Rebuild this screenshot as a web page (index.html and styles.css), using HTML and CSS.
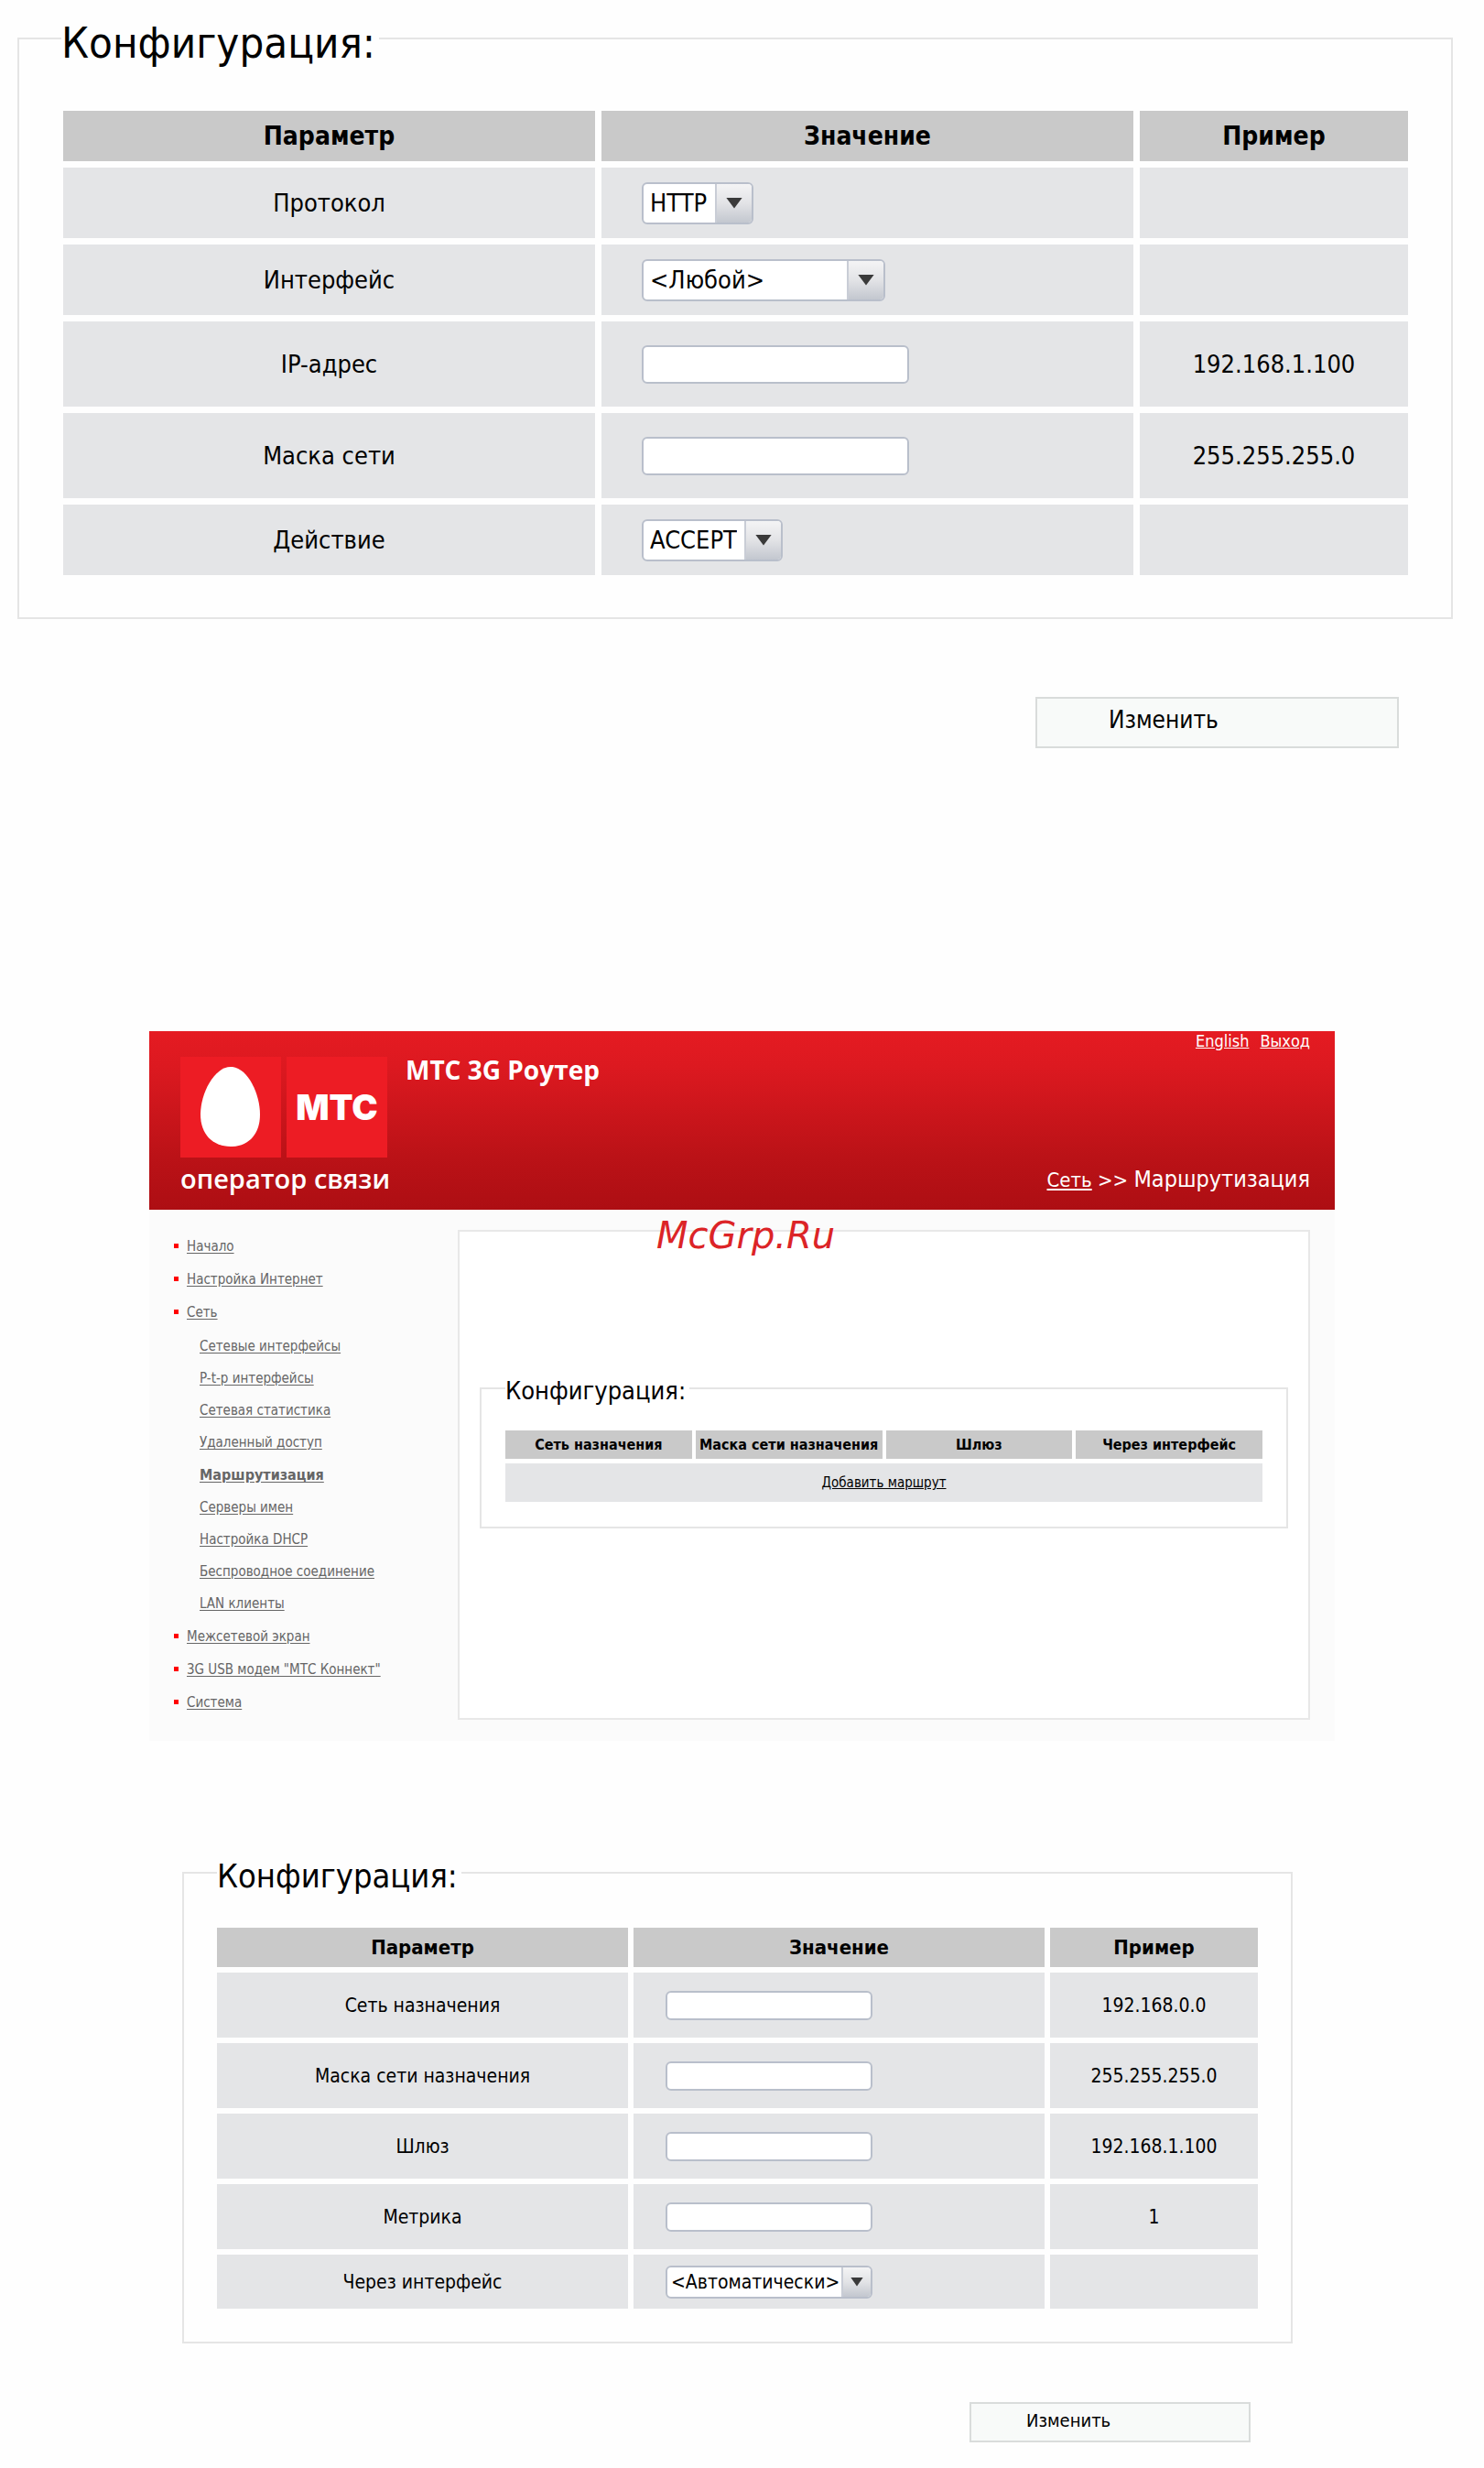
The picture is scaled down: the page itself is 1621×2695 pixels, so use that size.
FILE: index.html
```html
<!DOCTYPE html>
<html lang="ru">
<head>
<meta charset="utf-8">
<meta name="viewport" content="width=device-width, initial-scale=1">
<title>МТС 3G Роутер</title>
<link rel="stylesheet" href="styles.css">
</head>
<body>
<form class="form form-large">
  <fieldset class="frame">
    <legend>Конфигурация:</legend>
    <table class="grid">
      <colgroup><col><col><col class="col-example"></colgroup>
      <thead><tr><th>Параметр</th><th>Значение</th><th>Пример</th></tr></thead>
      <tbody>
        <tr class="row-select"><td><label for="proto">Протокол</label></td><td class="value"><span class="pick"><select id="proto"><option>HTTP</option></select></span></td><td></td></tr>
        <tr class="row-select"><td><label for="iface">Интерфейс</label></td><td class="value"><span class="pick pick-any"><select id="iface"><option>&lt;Любой&gt;</option></select></span></td><td></td></tr>
        <tr class="row-input"><td><label for="ip">IP-адрес</label></td><td class="value"><input id="ip" type="text"></td><td>192.168.1.100</td></tr>
        <tr class="row-input"><td><label for="mask">Маска сети</label></td><td class="value"><input id="mask" type="text"></td><td>255.255.255.0</td></tr>
        <tr class="row-select"><td><label for="action">Действие</label></td><td class="value"><span class="pick"><select id="action"><option>ACCEPT</option></select></span></td><td></td></tr>
      </tbody>
    </table>
  </fieldset>
  <button class="submit" type="button">Изменить</button>
</form>

<div class="app">
  <header class="top">
    <div class="logo">
      <div class="tiles">
        <svg class="tile" viewBox="0 0 110 110" aria-hidden="true"><path fill="#fff" d="M55 11C73 11 87 40 87 63C87 84 75 98 55 98C35 98 22 84 22 63C22 40 37 11 55 11Z"/></svg>
        <div class="tile">МТС</div>
      </div>
      <div class="slogan">оператор связи</div>
    </div>
    <h1>МТС 3G Роутер</h1>
    <div class="side">
      <div class="session"><a href="#">English</a><a href="#">Выход</a></div>
      <div class="crumbs"><a href="#">Сеть</a> &gt;&gt; <span class="here">Маршрутизация</span></div>
    </div>
  </header>
  <div class="body">
    <nav>
      <ul class="menu">
        <li><a href="#">Начало</a></li>
        <li><a href="#">Настройка Интернет</a></li>
        <li><a href="#">Сеть</a>
          <ul>
            <li><a href="#">Сетевые интерфейсы</a></li>
            <li><a href="#">P-t-p интерфейсы</a></li>
            <li><a href="#">Сетевая статистика</a></li>
            <li><a href="#">Удаленный доступ</a></li>
            <li><a class="current" href="#">Маршрутизация</a></li>
            <li><a href="#">Серверы имен</a></li>
            <li><a href="#">Настройка DHCP</a></li>
            <li><a href="#">Беспроводное соединение</a></li>
            <li><a href="#">LAN клиенты</a></li>
          </ul>
        </li>
        <li><a href="#">Межсетевой экран</a></li>
        <li><a href="#">3G USB модем "МТС Коннект"</a></li>
        <li><a href="#">Система</a></li>
      </ul>
    </nav>
    <main class="panel">
      <span class="watermark">McGrp.Ru</span>
      <fieldset class="frame">
        <legend>Конфигурация:</legend>
        <table class="grid">
          <thead><tr><th>Сеть назначения</th><th>Маска сети назначения</th><th>Шлюз</th><th>Через интерфейс</th></tr></thead>
          <tbody><tr><td colspan="4"><a href="#">Добавить маршрут</a></td></tr></tbody>
        </table>
      </fieldset>
    </main>
  </div>
</div>

<form class="form form-medium">
  <fieldset class="frame">
    <legend>Конфигурация:</legend>
    <table class="grid">
      <colgroup><col><col><col class="col-example"></colgroup>
      <thead><tr><th>Параметр</th><th>Значение</th><th>Пример</th></tr></thead>
      <tbody>
        <tr class="row-input"><td><label for="net">Сеть назначения</label></td><td class="value"><input id="net" type="text"></td><td>192.168.0.0</td></tr>
        <tr class="row-input"><td><label for="netmask">Маска сети назначения</label></td><td class="value"><input id="netmask" type="text"></td><td>255.255.255.0</td></tr>
        <tr class="row-input"><td><label for="gateway">Шлюз</label></td><td class="value"><input id="gateway" type="text"></td><td>192.168.1.100</td></tr>
        <tr class="row-input"><td><label for="metric">Метрика</label></td><td class="value"><input id="metric" type="text"></td><td>1</td></tr>
        <tr class="row-select"><td><label for="via">Через интерфейс</label></td><td class="value"><span class="pick"><select id="via"><option>&lt;Автоматически&gt;</option></select></span></td><td></td></tr>
      </tbody>
    </table>
  </fieldset>
  <button class="submit" type="button">Изменить</button>
</form>
</body>
</html>
```
FILE: styles.css
```css
* { box-sizing: border-box; }

body {
  margin: 0;
  background: #fefefe;
  color: #000;
  font-family: "DejaVu Sans Condensed", "DejaVu Sans", sans-serif;
}

/* Framed tables */
.frame {
  min-width: 0;
  margin: 0;
  border: 2px solid #e5e5e5;
}
.frame legend { padding: 0 4px 0 0; }
.grid {
  width: 100%;
  table-layout: fixed;
  border-collapse: separate;
}
.grid th, .grid td { padding: 0; text-align: center; }
.grid th { background: #c9c9c9; }
.grid td { background: #e4e5e7; }
.grid td.value { text-align: left; }
.grid a { color: inherit; }

/* Form controls */
input, select, .submit { font: inherit; color: inherit; }
input {
  display: block;
  border: 2px solid #b9bfcb;
  border-radius: 6px;
  background: #fff;
}
.pick {
  display: inline-grid;
  vertical-align: middle;
  border: 2px solid #b9bfcb;
  border-radius: 6px;
  background: #fff;
  overflow: hidden;
}
.pick select {
  grid-area: 1 / 1;
  appearance: none;
  width: 100%;
  margin: 0;
  border: 0;
  background: none;
}
.pick::before, .pick::after { content: ""; grid-area: 1 / 1; pointer-events: none; }
.pick::before {
  justify-self: end;
  border-left: 2px solid #c9cdd6;
  background: linear-gradient(#f4f4f5, #e2e3e6 50%, #c3c7cf);
}
.pick::after {
  place-self: center end;
  background: #3a3a3a;
  clip-path: polygon(0 0, 100% 0, 50% 100%);
}
.submit {
  display: block;
  border: 2px solid #d9dcdb;
  background: #f8faf9;
  text-align: left;
}

/* Large form */
.form-large { padding: 9px 34px 0 19px; font-size: 27px; }
.form-large .frame { padding: 39px 40px 39px 41px; }
.form-large legend { margin-left: 5px; padding-top: 10px; font-size: 47px; line-height: 56px; }
.form-large .grid { border-spacing: 7px; }
.form-large .col-example { width: 293px; }
.form-large th { height: 55px; font-size: 28px; }
.form-large .row-select td { height: 77px; }
.form-large .row-input td { height: 93px; }
.form-large .value { padding-left: 44px; }
.form-large input { width: 292px; height: 42px; }
.form-large .pick { height: 46px; }
.form-large .pick-any { width: 266px; }
.form-large select { padding: 0 48px 0 7px; }
.form-large .pick::before { width: 38px; }
.form-large .pick::after { width: 18px; height: 12px; margin-right: 10px; }
.form-large .submit {
  width: 397px;
  height: 56px;
  margin: 85px 59px 0 auto;
  padding: 0 0 7px 78px;
  font-size: 26px;
}

/* Router page */
.app { position: relative; margin: 309px 163px 0; }
.top {
  display: flex;
  height: 195px;
  padding: 0 27px 0 34px;
  background: linear-gradient(#e51b22, #dc1920 20%, #bb1217 70%, #ad0e13);
  color: #fff;
}
.top a { color: inherit; }
.logo { width: 226px; padding-top: 28px; }
.tiles { display: flex; justify-content: space-between; }
.tile {
  width: 110px;
  height: 110px;
  background: #ed1c24;
  font: 900 38px/110px Inter, sans-serif;
  text-align: center;
}
.slogan { font: 600 29px/46px "Open Sans", sans-serif; white-space: nowrap; }
.top h1 { margin: 22px 0 0 20px; font: 700 28px/40px "Open Sans", sans-serif; }
.side {
  display: flex;
  flex-direction: column;
  justify-content: space-between;
  align-items: flex-end;
  margin-left: auto;
}
.session { display: flex; gap: 12px; font-size: 18px; line-height: 22px; }
.crumbs { padding-bottom: 16px; font-size: 22px; line-height: 32px; }
.here { font-size: 25px; }

.body {
  display: grid;
  grid-template-columns: 311px 1fr;
  column-gap: 26px;
  padding: 22px 27px 23px 0;
  background: #fbfbfb;
}
.menu, .menu ul { margin: 0; padding: 0; list-style: none; }
.menu { padding-left: 27px; font-size: 15px; line-height: 36px; }
.menu a { color: #666; text-underline-offset: 2px; }
.menu > li > a::before {
  content: "";
  display: inline-block;
  width: 5px;
  height: 5px;
  margin-right: 9px;
  vertical-align: 3px;
  background: #f00;
}
.menu ul { padding: 2px 0 0 28px; line-height: 35px; }
.menu .current { font-size: 16px; font-weight: 700; }

.panel {
  border: 2px solid #e8e8e8;
  background: #fff;
  padding: 152px 22px 207px;
}
.panel .frame { padding: 22px; font-size: 15px; }
.panel legend { margin-left: 4px; padding-top: 6px; font-size: 27px; line-height: 32px; }
.panel .grid { border-spacing: 4px 5px; }
.panel th { height: 31px; font-size: 16px; white-space: nowrap; }
.panel td { height: 42px; }
.watermark {
  position: absolute;
  top: 201px;
  left: 554px;
  color: #dc2427;
  font-family: "DejaVu Sans", sans-serif;
  font-size: 40px;
  font-style: italic;
  line-height: 44px;
}

/* Medium form */
.form-medium { padding: 119px 209px 30px 199px; font-size: 21px; }
.form-medium .frame { padding: 29px 30px 30px; }
.form-medium legend { margin-left: 6px; padding-top: 8px; font-size: 36px; line-height: 42px; }
.form-medium .grid { border-spacing: 6px; }
.form-medium .col-example { width: 227px; }
.form-medium th { height: 43px; font-size: 22px; }
.form-medium .row-select td { height: 59px; }
.form-medium .row-input td { height: 71px; }
.form-medium .value { padding-left: 35px; }
.form-medium input, .form-medium .pick { width: 226px; }
.form-medium input { height: 32px; }
.form-medium .pick { height: 36px; }
.form-medium select { padding: 0 30px 0 4px; }
.form-medium .pick::before { width: 30px; }
.form-medium .pick::after { width: 14px; height: 10px; margin-right: 8px; }
.form-medium .submit {
  width: 307px;
  height: 44px;
  margin: 64px 46px 0 auto;
  padding: 0 0 5px 60px;
  font-size: 20px;
}
```
